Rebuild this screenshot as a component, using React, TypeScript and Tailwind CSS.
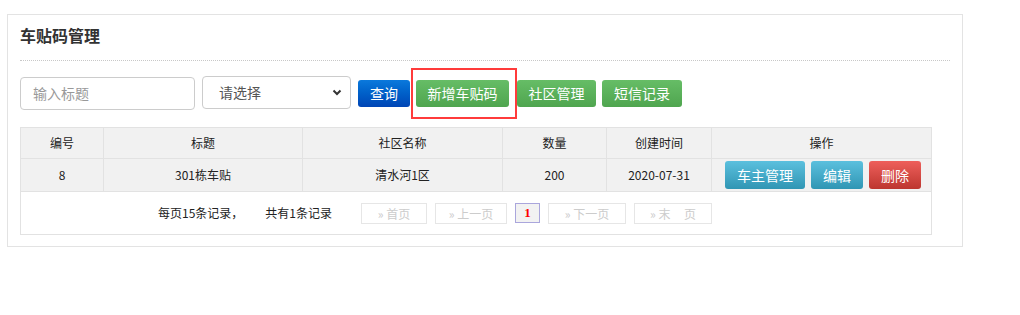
import React from "react";

const cjk = "font-['Noto_Sans_CJK_SC','Noto_Sans',sans-serif]";

function PageBtn({ children, w }: { children: React.ReactNode; w: string }) {
  return (
    <span
      className={`${w} h-[21px] border border-[#e6e6e6] text-[#cccccc] text-[12px] leading-[19px] flex items-center justify-center`}
    >
      {children}
    </span>
  );
}

export default function App() {
  return (
    <div className={`w-[1020px] h-[315px] bg-white pt-[14px] pl-[7px] ${cjk}`}>
      <div className="w-[956px] h-[233px] border border-[#e3e3e3] px-[12px]">
        <div className="h-[46px] border-b border-dotted border-[#c8c8c8] flex items-center">
          <span className="text-[16px] font-bold text-[#333] leading-none -mt-[6px]">车贴码管理</span>
        </div>
        <div className="flex items-center mt-[16px] h-[33px]">
          <div className="w-[175px] h-[33px] border border-[#cccccc] rounded-[4px] flex items-center pl-[12px] text-[14px] text-[#999]">
            输入标题
          </div>
          <div className="ml-[7px] w-[149px] h-[33px] -mt-[2px] border border-[#cccccc] rounded-[4px] flex items-center justify-between pl-[16px] pr-[8px] text-[14px] text-[#555]">
            <span>请选择</span>
            <svg width="10" height="7" viewBox="0 0 10 7">
              <path d="M1.5 1.5 L5 5 L8.5 1.5" fill="none" stroke="#333" strokeWidth="2" />
            </svg>
          </div>
          <button className="ml-[7px] w-[52px] h-[27px] rounded-[3px] bg-gradient-to-b from-[#0b79dc] to-[#0045b5] text-white text-[14px] flex items-center justify-center">
            查询
          </button>
          <div className="ml-[1px] relative w-[106px] h-[51px] border-2 border-[#ff3b3b] flex items-center pl-[3px]">
            <button className="w-[93px] h-[27px] rounded-[3px] bg-gradient-to-b from-[#66bd66] to-[#4fa54f] text-white text-[14px] flex items-center justify-center">
              新增车贴码
            </button>
          </div>
          <button className="ml-[0px] w-[79px] h-[27px] rounded-[3px] bg-gradient-to-b from-[#66bd66] to-[#4fa54f] text-white text-[14px] flex items-center justify-center">
            社区管理
          </button>
          <button className="ml-[6px] w-[80px] h-[27px] rounded-[3px] bg-gradient-to-b from-[#66bd66] to-[#4fa54f] text-white text-[14px] flex items-center justify-center">
            短信记录
          </button>
        </div>
        <table className="mt-[17px] w-[911px] border-collapse text-[12px] text-[#222] table-fixed">
          <colgroup>
            <col className="w-[83px]" />
            <col className="w-[199px]" />
            <col className="w-[200px]" />
            <col className="w-[104px]" />
            <col className="w-[105px]" />
            <col className="w-[220px]" />
          </colgroup>
          <tbody>
            <tr className="h-[31px] bg-[#f1f1f1]">
              {["编号", "标题", "社区名称", "数量", "创建时间", "操作"].map((t) => (
                <td key={t} className="border border-[#e2e2e2] text-center p-0">
                  {t}
                </td>
              ))}
            </tr>
            <tr className="h-[33px] bg-[#f1f1f1]">
              <td className="border border-[#e2e2e2] text-center p-0">8</td>
              <td className="border border-[#e2e2e2] text-center p-0">301栋车贴</td>
              <td className="border border-[#e2e2e2] text-center p-0">清水河1区</td>
              <td className="border border-[#e2e2e2] text-center p-0">200</td>
              <td className="border border-[#e2e2e2] text-center p-0">2020-07-31</td>
              <td className="border border-[#e2e2e2] p-0">
                <div className="flex items-center pl-[13px]">
                  <button className="w-[80px] h-[28px] rounded-[3px] bg-gradient-to-b from-[#5bc0de] to-[#2f96b4] text-white text-[14px]">
                    车主管理
                  </button>
                  <button className="ml-[6px] w-[52px] h-[28px] rounded-[3px] bg-gradient-to-b from-[#5bc0de] to-[#2f96b4] text-white text-[14px]">
                    编辑
                  </button>
                  <button className="ml-[6px] w-[52px] h-[28px] rounded-[3px] bg-gradient-to-b from-[#ee5f5b] to-[#bd362f] text-white text-[14px]">
                    删除
                  </button>
                </div>
              </td>
            </tr>
            <tr className="h-[43px]">
              <td colSpan={6} className="border border-[#e2e2e2] p-0">
                <div className="flex items-center pl-[137px] text-[12px] text-[#222]">
                  <span>每页15条记录，</span>
                  <span className="ml-[22px]">共有1条记录</span>
                  <div className="ml-[29px] flex items-center">
                    <PageBtn w="w-[66px]">» 首页</PageBtn>
                    <span className="ml-[8px]"><PageBtn w="w-[72px]">» 上一页</PageBtn></span>
                    <span className="ml-[8px] w-[25px] h-[20px] border border-[#aaa6dc] bg-[#f2f2f2] text-[#ff0000] font-bold text-[13px] flex items-center justify-center font-['Liberation_Serif',serif]">
                      1
                    </span>
                    <span className="ml-[8px]"><PageBtn w="w-[78px]">» 下一页</PageBtn></span>
                    <span className="ml-[8px]"><PageBtn w="w-[78px]">» 末&nbsp;&nbsp;&nbsp;&nbsp;&nbsp;页</PageBtn></span>
                  </div>
                </div>
              </td>
            </tr>
          </tbody>
        </table>
      </div>
    </div>
  );
}
